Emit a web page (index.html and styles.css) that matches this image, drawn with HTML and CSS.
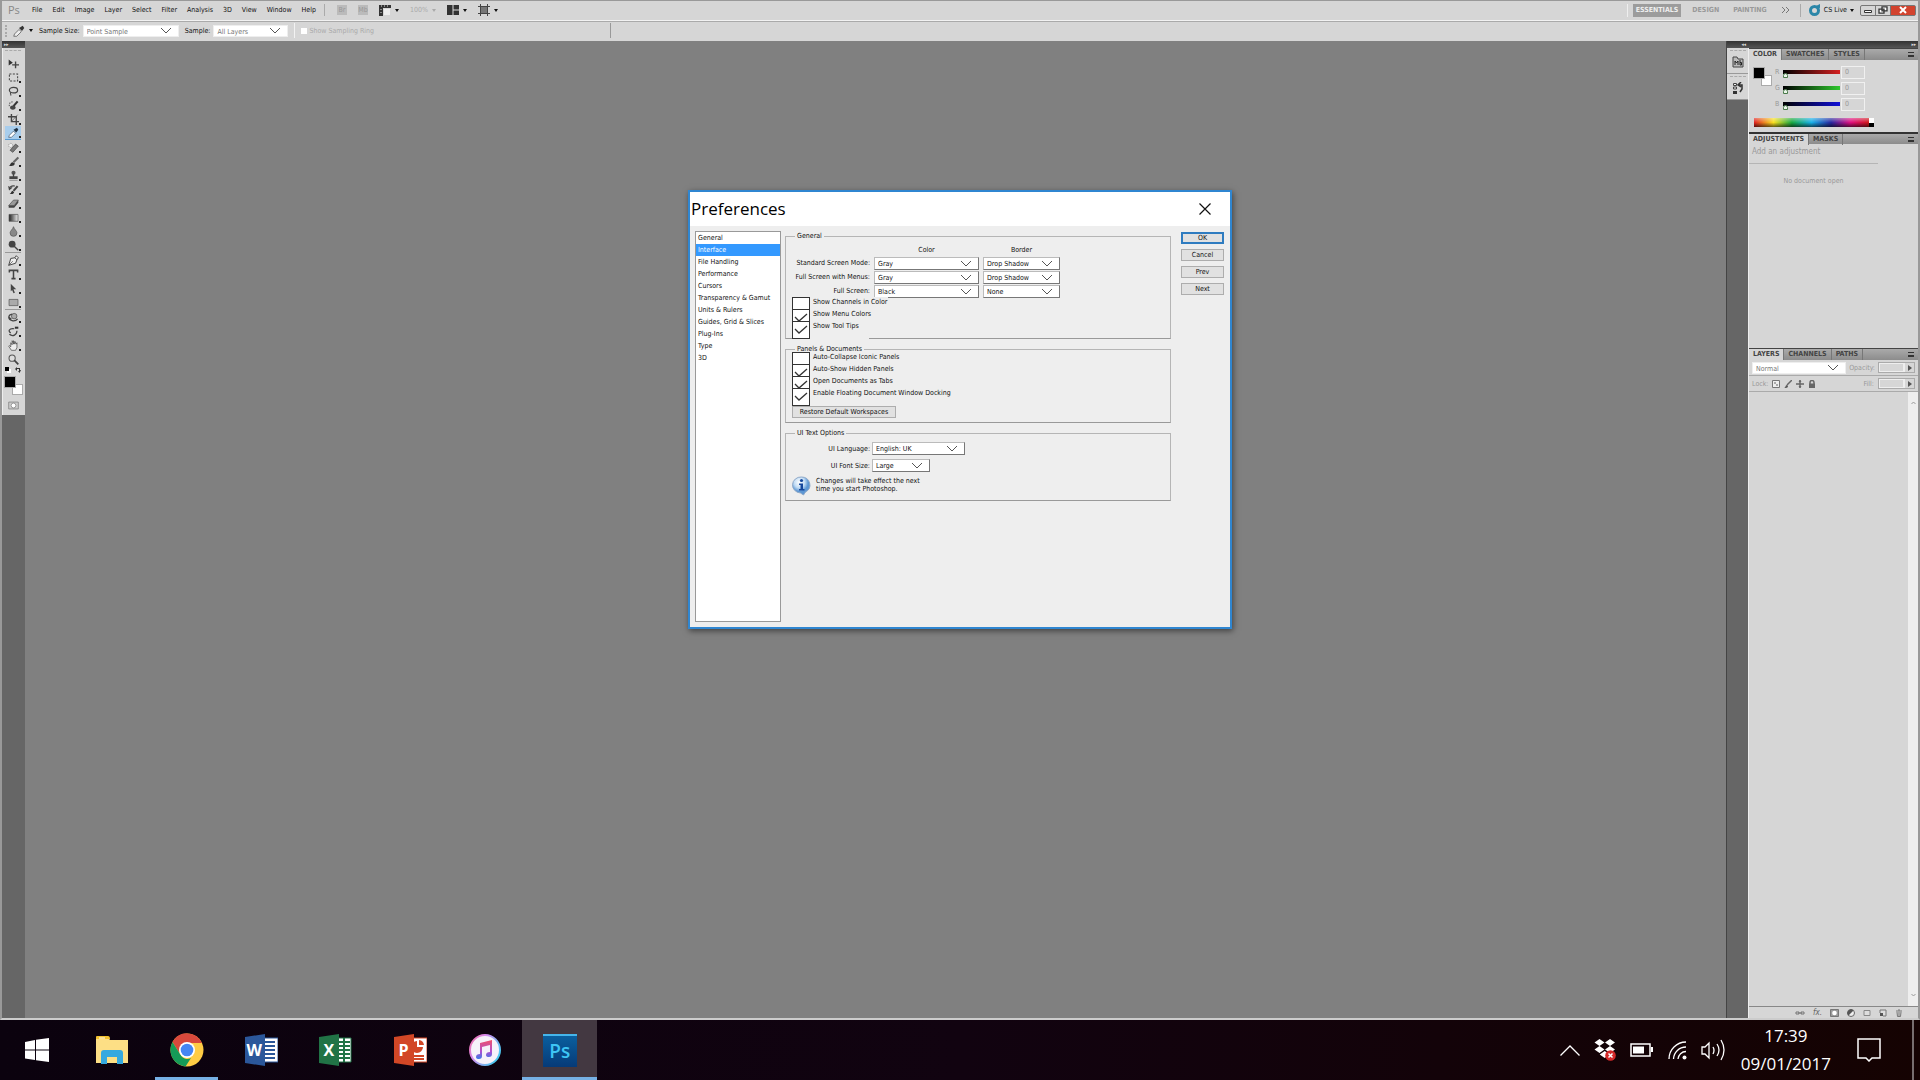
FILE: index.html
```html
<!DOCTYPE html>
<html lang="en">
<head>
    <meta charset="UTF-8">
    <meta name="viewport" content="width=device-width, initial-scale=1.0">
    <title>Preferences</title>
    <link rel="stylesheet" href="styles.css">
</head>
<body>
    <div class="app">
        <header class="menubar">
            <span class="app-logo">Ps</span>
            <nav class="menus">
                <button>File</button>
                <button>Edit</button>
                <button>Image</button>
                <button>Layer</button>
                <button>Select</button>
                <button>Filter</button>
                <button>Analysis</button>
                <button>3D</button>
                <button>View</button>
                <button>Window</button>
                <button>Help</button>
            </nav>
            <div class="menu-tools">
                <span class="app-chip">Br</span>
                <span class="app-chip">Mb</span>
                <button class="drop" aria-label="View extras">
                    <svg width="12" height="12" viewBox="0 0 12 12"><path d="M0 1h12v3H4v8H0z" fill="#333"/><path d="M2 2h1M5 2h1M8 2h1M2 5v1M2 8v1" stroke="#ddd"/><path d="M5 5h6v6H5z" fill="#eee"/></svg>
                    <i class="caret"></i>
                </button>
                <button class="drop faded">100% <i class="caret"></i></button>
                <button class="drop" aria-label="Arrange documents">
                    <svg width="12" height="12" viewBox="0 0 12 12"><path d="M0 1h12v10H0z" fill="#333"/><path d="M6 1v10M6 6h6" stroke="#ddd"/></svg>
                    <i class="caret"></i>
                </button>
                <button class="drop" aria-label="Screen mode">
                    <svg width="12" height="12" viewBox="0 0 12 12"><path d="M2.500 0v12M9.500 0v12M0 2.500h12M0 9.500h12" stroke="#444"/><path d="M3 3h6v6H3z" fill="#777"/></svg>
                    <i class="caret"></i>
                </button>
            </div>
            <div class="workspaces">
                <button class="active">ESSENTIALS</button>
                <button>DESIGN</button>
                <button>PAINTING</button>
                <button class="more" aria-label="More workspaces">
                    <svg width="9" height="8" viewBox="0 0 9 8"><path d="M1 1l3 3-3 3M5 1l3 3-3 3" fill="none" stroke="#777"/></svg>
                </button>
            </div>
            <button class="cs-live">
                <svg width="12" height="12" viewBox="0 0 12 12"><circle cx="5.500" cy="6.500" r="4" fill="none" stroke="#2b86a8" stroke-width="3"/><path d="M5 3l6-3v4z" fill="#2b86a8"/></svg>
                CS Live <i class="caret"></i>
            </button>
            <div class="window-buttons">
                <button aria-label="Minimise"><svg width="10" height="8" viewBox="0 0 10 8"><path d="M1.500 4.500h7v2h-7z" fill="#fff" stroke="#333"/></svg></button>
                <button aria-label="Restore"><svg width="10" height="8" viewBox="0 0 10 8"><path d="M4 .8h5v4H4zM1 3.200h5v4H1z" fill="#fff" stroke="#333" stroke-width="1.300"/></svg></button>
                <button class="close" aria-label="Close"><svg width="8" height="8" viewBox="0 0 8 8"><path d="M1 1l6 6M7 1L1 7" stroke="#fff" stroke-width="2"/></svg></button>
            </div>
        </header>

        <div class="optionsbar">
            <span class="grip"></span>
            <button class="drop" aria-label="Eyedropper presets">
                <svg width="12" height="12" viewBox="0 0 16 16"><path d="M1 15l1-3 6-6 3 3-6 6z" fill="#eee" stroke="#555"/><path d="M8 4l4 4 3-4-2-3z" fill="#333"/></svg>
                <i class="caret"></i>
            </button>
            <label for="sample-size">Sample Size:</label>
            <select id="sample-size" class="select pale size"><option>Point Sample</option></select>
            <label for="sample-layers">Sample:</label>
            <select id="sample-layers" class="select pale layers-opt"><option>All Layers</option></select>
            <span class="rule"></span>
            <label class="ring"><input type="checkbox" disabled> Show Sampling Ring</label>
            <span class="rule far"></span>
        </div>

        <div class="workspace">
            <aside class="toolcol">
                <div class="dock-head"><span>▸▸</span></div>
                <div class="tools">
                    <span class="dots"></span>
                    <button aria-label="Move"><svg viewBox="0 0 16 16"><path d="M1 2l6 5-6 4z" fill="#333"/><path d="M11 5v10M6 10h10" stroke="#444" stroke-width="2"/></svg></button>
                    <button class="more" aria-label="Marquee"><svg viewBox="0 0 16 16"><path d="M2 3h12v10H2z" fill="none" stroke="#444" stroke-dasharray="3 2" stroke-width="1.500"/></svg></button>
                    <button class="more" aria-label="Lasso"><svg viewBox="0 0 16 16"><ellipse cx="8" cy="6" rx="6" ry="4" fill="none" stroke="#444" stroke-width="1.800"/><path d="M4 9c-2 1 1 3 0 5" fill="none" stroke="#444" stroke-width="1.500"/></svg></button>
                    <button class="more" aria-label="Quick selection"><svg viewBox="0 0 16 16"><path d="M14 2L8 9" stroke="#333" stroke-width="3"/><ellipse cx="7" cy="11" rx="4" ry="3" fill="#444"/><path d="M2 9c-1-5 3-7 6-6" fill="none" stroke="#555" stroke-dasharray="2 1.500" stroke-width="1.500"/></svg></button>
                    <button class="more" aria-label="Crop"><svg viewBox="0 0 16 16"><path d="M5 0v11h11M0 4h12v12" fill="none" stroke="#444" stroke-width="2"/><path d="M14 1L5 11" stroke="#555"/></svg></button>
                    <button class="more active" aria-label="Eyedropper"><svg viewBox="0 0 16 16"><path d="M1 15l1-3 6-6 3 3-6 6z" fill="#fff" stroke="#456"/><path d="M8 4l4 4 3-4-2-3z" fill="#234"/></svg></button>
                    <button class="more" aria-label="Healing brush"><svg viewBox="0 0 16 16"><path d="M3 12l8-9 4 3-8 9z" fill="#777" stroke="#444"/><circle cx="4" cy="5" r="3" fill="#eee" stroke="#888" stroke-dasharray="2 1"/></svg></button>
                    <button class="more" aria-label="Brush"><svg viewBox="0 0 16 16"><path d="M15 2L8 9" stroke="#666" stroke-width="3"/><path d="M1 14c3 0 2-5 6-5l3 2c-1 4-5 4-9 3z" fill="#333"/></svg></button>
                    <button class="more" aria-label="Stamp"><svg viewBox="0 0 16 16"><circle cx="8" cy="4" r="3" fill="#555"/><path d="M7 5h2v4h5v4H2V9h5z" fill="#444"/><path d="M2 15h12" stroke="#777"/></svg></button>
                    <button class="more" aria-label="History brush"><svg viewBox="0 0 16 16"><path d="M14 3L8 10" stroke="#444" stroke-width="3"/><path d="M2 14c3 0 2-4 5-4l2 2c-1 3-4 3-7 2z" fill="#333"/><path d="M2 8c0-4 3-6 8-5M1 3l1 5 4-3" fill="none" stroke="#444" stroke-width="1.500"/></svg></button>
                    <button class="more" aria-label="Eraser"><svg viewBox="0 0 16 16"><path d="M1 11l7-8h7l-6 8z" fill="#999" stroke="#555"/><path d="M1 11h8l6-8v4l-6 7H1z" fill="#444"/></svg></button>
                    <button class="more" aria-label="Gradient"><svg viewBox="0 0 16 16"><defs><linearGradient id="grad"><stop stop-color="#222"/><stop offset="1" stop-color="#eee"/></linearGradient></defs><path d="M1.500 3.500h13v10h-13z" fill="url(#grad)" stroke="#555"/></svg></button>
                    <button class="more" aria-label="Blur"><svg viewBox="0 0 16 16"><path d="M8 1c1 4 5 6 5 9a5 5 0 01-10 0c0-3 4-5 5-9z" fill="#888" stroke="#555"/></svg></button>
                    <button class="more" aria-label="Burn"><svg viewBox="0 0 16 16"><circle cx="6" cy="6" r="5" fill="#444"/><path d="M9 9l6 6" stroke="#444" stroke-width="2"/></svg></button>
                    <hr>
                    <button class="more" aria-label="Pen"><svg viewBox="0 0 16 16"><path d="M1 15l3-10 6-1 3 3-2 5zM10 4l2-3 3 3-2 3" fill="#eee" stroke="#444" stroke-width="1.400"/><path d="M1 15l6-6" stroke="#444"/></svg></button>
                    <button class="more" aria-label="Type"><svg viewBox="0 0 16 16"><path d="M2 5V2h12v3M8 2v12M5 14h6" fill="none" stroke="#444" stroke-width="2.200"/></svg></button>
                    <button class="more" aria-label="Path selection"><svg viewBox="0 0 16 16"><path d="M4 1l8 8H8l2 5-2 1-2-5-2 2z" fill="#444"/></svg></button>
                    <button class="more" aria-label="Rectangle"><svg viewBox="0 0 16 16"><path d="M1.500 3.500h13v9h-13z" fill="#aaa" stroke="#555"/></svg></button>
                    <hr>
                    <button class="more" aria-label="3D rotate"><svg viewBox="0 0 16 16"><circle cx="9" cy="6" r="4" fill="#aaa" stroke="#444"/><path d="M1 7c0 6 9 8 13 3M6 3C0 4 0 9 5 10" fill="none" stroke="#444" stroke-width="1.800"/></svg></button>
                    <button class="more" aria-label="3D camera"><svg viewBox="0 0 16 16"><path d="M10 1h5v3h-5z" fill="#333"/><path d="M9 4C1 3 0 8 4 10M2 12c5 4 11 1 11-5" fill="none" stroke="#444" stroke-width="1.800"/></svg></button>
                    <button class="more" aria-label="Hand"><svg viewBox="0 0 16 16"><path d="M5 15L1 9l1-1 2 2V4l2 3V1l2 5V1l2 5V2l2 4 1-2v7l-2 4z" fill="#eee" stroke="#444"/></svg></button>
                    <button aria-label="Zoom"><svg viewBox="0 0 16 16"><circle cx="6" cy="6" r="4.500" fill="#ddd" stroke="#555" stroke-width="1.500"/><path d="M9 9l6 6" stroke="#444" stroke-width="2.500"/></svg></button>
                    <div class="swap">
                        <svg width="6" height="6" viewBox="0 0 6 6"><path d="M2 2h4v4H2z" fill="#fff"/><path d="M0 0h4v4H0z"/></svg>
                        <svg width="6" height="6" viewBox="0 0 6 6"><path d="M0 2l2-2v1h3v2h1L4.500 6 3 4h1V2H2v2z" fill="#333"/></svg>
                    </div>
                    <div class="swatches"><span class="back"></span><span class="fore"></span></div>
                    <button class="mask" aria-label="Quick mask"><svg viewBox="0 0 16 16"><path d="M1 3h14v10H1z" fill="#ccc" stroke="#777"/><circle cx="8" cy="8" r="3.500" fill="#fff" stroke="#777"/></svg></button>
                </div>
            </aside>

            <main class="canvas"></main>

            <aside class="iconcol">
                <div class="dock-head end"><span>◂◂</span></div>
                <div class="icon-slot">
                    <span class="dots"></span>
                    <button aria-label="Mini Bridge"><svg width="12" height="12" viewBox="0 0 12 12"><path d="M1 3V1h4l1 2h5v8H1z" fill="#bbb" stroke="#444"/><path d="M3 9V5l1.500 2L6 5v4M8 4v5h1.500V6.500H8" fill="none" stroke="#222"/></svg></button>
                </div>
                <div class="icon-slot">
                    <span class="dots"></span>
                    <button aria-label="History"><svg width="12" height="12" viewBox="0 0 12 12"><path d="M1.500 1.500h3v2h-3zM1.500 5h3v2h-3z" fill="#eee" stroke="#444"/><path d="M1 9h4v3H1z" fill="#333"/><path d="M6 3h4v4L8 10M9 0L6 3l3 2" fill="none" stroke="#333" stroke-width="1.500"/></svg></button>
                </div>
            </aside>

            <aside class="panels">
                <div class="dock-head end"><span>▸▸</span></div>
                <section class="panel color-panel">
                    <div class="tabs">
                        <button class="active">COLOR</button><button>SWATCHES</button><button>STYLES</button>
                        <span class="panel-menu"></span>
                    </div>
                    <div class="color-body">
                        <div class="swatches"><span class="back"></span><span class="fore"></span></div>
                        <div class="sliders">
                            <label for="red">R</label><input id="red" class="red" type="range" value="0" max="255"><input type="text" value="0" aria-label="Red value">
                            <label for="green">G</label><input id="green" class="green" type="range" value="0" max="255"><input type="text" value="0" aria-label="Green value">
                            <label for="blue">B</label><input id="blue" class="blue" type="range" value="0" max="255"><input type="text" value="0" aria-label="Blue value">
                        </div>
                    </div>
                    <div class="spectrum"><span class="hues"></span><span class="ends"></span></div>
                </section>
                <section class="panel adjust-panel">
                    <div class="tabs">
                        <button class="active">ADJUSTMENTS</button><button>MASKS</button>
                        <span class="panel-menu"></span>
                    </div>
                    <p class="adjust-title">Add an adjustment</p>
                    <p class="adjust-empty">No document open</p>
                </section>
                <section class="panel layers-panel">
                    <div class="tabs">
                        <button class="active">LAYERS</button><button>CHANNELS</button><button>PATHS</button>
                        <span class="panel-menu"></span>
                    </div>
                    <div class="layer-row">
                        <select class="select pale blend" aria-label="Blend mode"><option>Normal</option></select>
                        <label for="opacity">Opacity:</label>
                        <span class="stepper"><input id="opacity" type="text"><button aria-label="Opacity slider"><i></i></button></span>
                    </div>
                    <div class="layer-row lock">
                        <span>Lock:</span>
                        <svg width="8" height="8" viewBox="0 0 8 8"><path d="M.5.5h7v7h-7z" fill="#eee" stroke="#777"/><path d="M2 2h2v2H2zM4 4h2v2H4z" fill="#aaa"/></svg>
                        <svg width="8" height="8" viewBox="0 0 8 8"><path d="M8 0L3 5" stroke="#666" stroke-width="1.500"/><path d="M0 8c2 0 1-3 3-3l1 1c0 2-2 2-4 2z" fill="#555"/></svg>
                        <svg width="8" height="8" viewBox="0 0 8 8"><path d="M4 0v8M0 4h8" stroke="#666" stroke-width="1.500"/><path d="M2.500 2L4 0l1.500 2M2.500 6L4 8l1.500-2" fill="#666"/></svg>
                        <svg width="8" height="8" viewBox="0 0 8 8"><path d="M2 4V2.500a2 2 0 014 0V4" fill="none" stroke="#666" stroke-width="1.500"/><path d="M1 3.500h6V8H1z" fill="#666"/></svg>
                        <label for="fill">Fill:</label>
                        <span class="stepper"><input id="fill" type="text"><button aria-label="Fill slider"><i></i></button></span>
                    </div>
                    <div class="layer-list">
                        <div class="scroll">
                            <svg width="5" height="4" viewBox="0 0 5 4"><path d="M.5 3l2-2 2 2" fill="none" stroke="#999"/></svg>
                            <svg width="5" height="4" viewBox="0 0 5 4"><path d="M.5 1l2 2 2-2" fill="none" stroke="#999"/></svg>
                        </div>
                    </div>
                    <div class="layer-foot">
                        <svg width="10" height="8" viewBox="0 0 10 8"><path d="M1 3h3v2H1zM6 3h3v2H6zM3 4h4" fill="none" stroke="#777"/></svg>
                        <span class="fx">fx.</span>
                        <svg width="9" height="8" viewBox="0 0 9 8"><path d="M.5.5h8v7h-8z" fill="#999" stroke="#777"/><circle cx="4.500" cy="4" r="2.300" fill="#fff"/></svg>
                        <svg width="8" height="8" viewBox="0 0 8 8"><circle cx="4" cy="4" r="3.500" fill="#eee" stroke="#666"/><path d="M1.500 6.500l5-5A3.500 3.500 0 001.500 6.500z" fill="#555"/></svg>
                        <svg width="8" height="8" viewBox="0 0 8 8"><path d="M1 1.500h6v5H1z" fill="#ddd" stroke="#888"/></svg>
                        <svg width="8" height="8" viewBox="0 0 8 8"><path d="M1 1h6v6H4L1 4z" fill="#ddd" stroke="#777"/><path d="M1 7V4h3v3z" fill="#555"/></svg>
                        <svg width="8" height="8" viewBox="0 0 8 8"><path d="M1 2h6M2 3l.5 4.500h3L6 3M3 1h2M4 3v4" fill="none" stroke="#777"/></svg>
                    </div>
                </section>
            </aside>
        </div>
    </div>

    <div class="dialog" role="dialog" aria-labelledby="dialog-title">
        <div class="dialog-title">
            <h1 id="dialog-title">Preferences</h1>
            <button aria-label="Close">
                <svg width="12" height="12" viewBox="0 0 12 12"><path d="M.5.5l11 11M11.500.5l-11 11" stroke="#111" stroke-width="1.200"/></svg>
            </button>
        </div>
        <div class="dialog-body">
            <ul class="sections">
                <li><a href="#">General</a></li>
                <li class="selected"><a href="#">Interface</a></li>
                <li><a href="#">File Handling</a></li>
                <li><a href="#">Performance</a></li>
                <li><a href="#">Cursors</a></li>
                <li><a href="#">Transparency &amp; Gamut</a></li>
                <li><a href="#">Units &amp; Rulers</a></li>
                <li><a href="#">Guides, Grid &amp; Slices</a></li>
                <li><a href="#">Plug-Ins</a></li>
                <li><a href="#">Type</a></li>
                <li><a href="#">3D</a></li>
            </ul>

            <form class="groups">
                <fieldset class="general">
                    <legend>General</legend>
                    <div class="screen-grid">
                        <span></span><span class="col-head">Color</span><span class="col-head">Border</span>
                        <label for="std">Standard Screen Mode:</label>
                        <select id="std" class="select"><option>Gray</option></select>
                        <select class="select" aria-label="Standard border"><option>Drop Shadow</option></select>
                        <label for="full-menus">Full Screen with Menus:</label>
                        <select id="full-menus" class="select"><option>Gray</option></select>
                        <select class="select" aria-label="Full screen with menus border"><option>Drop Shadow</option></select>
                        <label for="full">Full Screen:</label>
                        <select id="full" class="select"><option>Black</option></select>
                        <select class="select" aria-label="Full screen border"><option>None</option></select>
                    </div>
                    <div class="checks">
                        <label><input type="checkbox"><span>Show Channels in Color</span></label>
                        <label><input type="checkbox" checked><span>Show Menu Colors</span></label>
                        <label><input type="checkbox" checked><span>Show Tool Tips</span></label>
                    </div>
                </fieldset>

                <fieldset class="documents">
                    <legend>Panels &amp; Documents</legend>
                    <div class="checks">
                        <label><input type="checkbox"><span>Auto-Collapse Iconic Panels</span></label>
                        <label><input type="checkbox" checked><span>Auto-Show Hidden Panels</span></label>
                        <label><input type="checkbox" checked><span>Open Documents as Tabs</span></label>
                        <label><input type="checkbox" checked><span>Enable Floating Document Window Docking</span></label>
                    </div>
                    <button type="button" class="push restore">Restore Default Workspaces</button>
                </fieldset>

                <fieldset class="text-options">
                    <legend>UI Text Options</legend>
                    <div class="field">
                        <label for="language">UI Language:</label>
                        <select id="language" class="select language"><option>English: UK</option></select>
                    </div>
                    <div class="field">
                        <label for="font-size">UI Font Size:</label>
                        <select id="font-size" class="select font-size"><option>Large</option></select>
                    </div>
                    <div class="note">
                        <svg width="19" height="20" viewBox="0 0 19 20">
                            <defs><radialGradient id="bubble" cx=".4" cy=".3"><stop stop-color="#fff"/><stop offset=".6" stop-color="#c3ddf5"/><stop offset="1" stop-color="#5d97d4"/></radialGradient></defs>
                            <path d="M9.500 1a8.500 8 0 014 15l-2 3-3-2A8.500 8 0 019.500 1z" fill="url(#bubble)" stroke="#8fa9c8"/>
                            <circle cx="9.500" cy="4.500" r="1.600" fill="#15479c"/><path d="M7 7.500h4V13h1.500v1.500H7V13h1.500V9H7z" fill="#15479c"/>
                        </svg>
                        <p>Changes will take effect the next<br>time you start Photoshop.</p>
                    </div>
                </fieldset>
            </form>

            <div class="actions">
                <button class="push default">OK</button>
                <button class="push">Cancel</button>
                <button class="push">Prev</button>
                <button class="push">Next</button>
            </div>
        </div>
    </div>

    <footer class="taskbar">
        <div class="pinned">
            <button aria-label="Start"><svg width="24" height="24" viewBox="0 0 24 24"><path d="M0 4l10-2v9.500H0zM11 1.800L24 0v11.500H11zM0 12.500h10V22L0 20.500zM11 12.500h13V24l-13-1.800z" fill="#fff"/></svg></button>
            <button aria-label="File Explorer"><svg width="32" height="28" viewBox="0 0 32 28"><path d="M0 1h12l2 3h18v23H0z" fill="#fddf85"/><path d="M0 1q0-1 1-1h11q2 0 2 3H0z" fill="#f2c230"/><path d="M3 2h6" stroke="#fff"/><path d="M5 28V17q0-3 3-3h16q3 0 3 3v11h-6v-7H11v7z" fill="#35a9df"/></svg></button>
            <button class="running" aria-label="Chrome"><svg width="34" height="34" viewBox="0 0 34 34"><circle cx="17" cy="17" r="16.500" fill="#fc4"/><path d="M2.500 9A16.500 16.500 0 0132 10H17a8 8 0 00-7 11z" fill="#d9493c"/><path d="M2.500 9l7.500 12a8 8 0 0011 4l-5.500 8.500A16.500 16.500 0 012.500 9z" fill="#159b57"/><circle cx="17" cy="17" r="8" fill="#fff"/><circle cx="17" cy="17" r="6.300" fill="#4586f3"/></svg></button>
            <button class="office" aria-label="Word"><span>W</span><svg width="33" height="32" viewBox="0 0 33 32"><path d="M18 4h15v24H18z" fill="#fff" stroke="#2b579a"/><path d="M19 8h11M19 12h11M19 16h11M19 20h11M19 24h11" stroke="#2b579a" stroke-width="2"/><path d="M0 3l20-3v32L0 29z" fill="#2b579a"/></svg></button>
            <button class="office" aria-label="Excel"><span>X</span><svg width="33" height="32" viewBox="0 0 33 32"><path d="M18 4h14v24H18z" fill="#fff" stroke="#217346"/><path d="M19 8h12M19 12h12M19 16h12M19 20h12M19 24h12M25 4v24" stroke="#217346" stroke-width="2"/><path d="M0 3l20-3v32L0 29z" fill="#217346"/></svg></button>
            <button class="office" aria-label="PowerPoint"><span>P</span><svg width="33" height="32" viewBox="0 0 33 32"><path d="M18 4h15v24H18z" fill="#fff" stroke="#d24726"/><path d="M19 22h11M19 25h11" stroke="#d24726" stroke-width="2"/><path d="M23 7v6h6a6 6 0 11-6-6z" fill="#d24726"/><path d="M25 6a6 6 0 015 5h-5z" fill="#d24726"/><path d="M0 3l20-3v32L0 29z" fill="#d24726"/></svg></button>
            <button aria-label="iTunes"><svg width="32" height="32" viewBox="0 0 32 32"><defs><linearGradient id="ring" x2="1" y2=".6"><stop stop-color="#f06a9b"/><stop offset=".4" stop-color="#d68cf0"/><stop offset="1" stop-color="#4bc8f0"/></linearGradient><linearGradient id="note" x2="0" y2="1"><stop stop-color="#f0506a"/><stop offset=".6" stop-color="#b04fd0"/><stop offset="1" stop-color="#3a7be8"/></linearGradient></defs><circle cx="16" cy="16" r="15" fill="#f6f2fa" stroke="url(#ring)" stroke-width="2"/><path d="M11 9l12-3v14q0 3-3 3t-3-2q0-3 4-3v-7l-8 2v9q0 3-3 3t-3-2q0-3 4-3z" fill="url(#note)"/></svg></button>
            <button class="running current ps" aria-label="Photoshop"><b>Ps</b></button>
        </div>
        <div class="tray">
            <svg width="20" height="11" viewBox="0 0 20 11"><path d="M.5 10.500L10 1l9.500 9.500" fill="none" stroke="#fff" stroke-width="1.300"/></svg>
            <svg width="22" height="22" viewBox="0 0 22 22"><path d="M5.500 0l5 3.500-5 3.500-5-3.500zM16 0l5 3.500L16 7l-5-3.500zM5.500 7l5 3.500-5 3.500-5-3.500zM16 7l5 3.500-5 3.500-5-3.500zM10.700 12l5 3.500-5 3.500-5-3.500z" fill="#fff"/><circle cx="16.500" cy="16.500" r="5.300" fill="#d42a2a"/><path d="M14.500 14.500l4 4M18.500 14.500l-4 4" stroke="#fff" stroke-width="1.500"/></svg>
            <svg width="24" height="14" viewBox="0 0 24 14"><path d="M1 1h19v12H1z" fill="none" stroke="#fff" stroke-width="1.500"/><path d="M3 3.500h11v7H3z" fill="#fff"/><path d="M21 4h2v5h-2z" fill="#fff"/></svg>
            <svg width="19" height="19" viewBox="0 0 19 19"><path d="M1 18A17 17 0 0118 1M5.500 18A12.500 12.500 0 0118 6M10 18a8 8 0 018-7.500" fill="none" stroke="#fff" stroke-width="1.300"/><circle cx="16.500" cy="16.500" r="2" fill="#fff"/></svg>
            <svg width="25" height="22" viewBox="0 0 25 22"><path d="M1 8v7h3l4 4V4L4 8z" fill="none" stroke="#fff" stroke-width="1.300"/><path d="M12 8q2 3 0 7M16 5q4 6 0 12M20 1q6 10 0 20" fill="none" stroke="#fff" stroke-width="1.300"/></svg>
            <div class="clock"><time>17:39</time><time>09/01/2017</time></div>
            <svg width="24" height="24" viewBox="0 0 24 24"><path d="M1 1h22v19h-8l-3 3-3-3H1z" fill="none" stroke="#fff" stroke-width="1.500"/></svg>
        </div>
    </footer>
</body>
</html>
```
FILE: styles.css
```css
* {
    box-sizing: border-box;
}

body {
    margin: 0;
    height: 100vh;
    display: flex;
    flex-direction: column;
    background-color: #808080;
    color: #111;
    font-family: "DejaVu Sans Condensed", "DejaVu Sans", sans-serif;
    font-size: 7px;
    line-height: 12px;
    overflow: hidden;
}

button,
input,
select {
    font: inherit;
    color: inherit;
    margin: 0;
    padding: 0;
    border: none;
    border-radius: 0;
    background: none;
}

svg {
    display: block;
    flex: none;
}

a {
    color: inherit;
    text-decoration: none;
}

p {
    margin: 0;
}

.app {
    flex: 1;
    min-height: 0;
    display: flex;
    flex-direction: column;
    border: 2px solid #999;
    border-top-width: 1px;
    border-bottom-color: #ccc;
}

.caret {
    border: 2px solid transparent;
    border-top: 3px solid currentColor;
    border-bottom: 0;
}

/* menu bar */
.menubar {
    display: flex;
    align-items: center;
    height: 20px;
    flex: none;
    padding: 0 2px 1px 6px;
    background-color: #d6d6d6;
    border-bottom: 1px solid #f2f2f2;
}

.app-logo {
    width: 24px;
    font-family: "Open Sans", sans-serif;
    font-size: 11px;
    color: #888;
}

.menus {
    display: flex;
    gap: 10px;
    padding-right: 8px;
    border-right: 1px solid #aaa;
}

.menu-tools {
    display: flex;
    align-items: center;
    gap: 11px;
    padding-left: 12px;
}

.app-chip {
    width: 10px;
    height: 10px;
    line-height: 10px;
    text-align: center;
    background-color: #bbb;
    color: #999;
}

.drop {
    display: flex;
    align-items: center;
    gap: 4px;
}

.faded {
    color: #aaa;
}

.workspaces {
    display: flex;
    align-items: center;
    gap: 8px;
    margin-left: auto;
    padding: 0 7px 0 5px;
    border-left: 1px solid #eee;
    border-right: 1px solid #aaa;
    color: #999;
    font-weight: bold;
}

.workspaces button {
    height: 13px;
    padding: 0 3px;
}

.workspaces .active {
    background-color: #9c9c9c;
    color: #eee;
}

.cs-live {
    display: flex;
    align-items: center;
    gap: 3px;
    padding: 0 6px 0 8px;
}

.window-buttons {
    display: flex;
    border: 1px solid #777;
    border-radius: 2px;
}

.window-buttons button {
    display: flex;
    align-items: center;
    justify-content: center;
    width: 15px;
    height: 9px;
    border-right: 1px solid #777;
}

.window-buttons .close {
    width: 24px;
    border-right: none;
    background-color: #d2432e;
}

/* options bar */
.optionsbar {
    display: flex;
    align-items: center;
    height: 20px;
    flex: none;
    padding: 0 0 2px 3px;
    background-color: #d6d6d6;
    border-top: 1px solid #aaa;
}

.grip {
    height: 12px;
    margin-right: 6px;
    border-left: 2px dotted #aaa;
}

.optionsbar label {
    margin: 0 3px 0 6px;
}

.select {
    appearance: none;
    width: 100%;
    height: 13px;
    padding-left: 3px;
    background: #fff url("data:image/svg+xml,%3Csvg xmlns='http://www.w3.org/2000/svg' width='12' height='7'%3E%3Cpath d='M1 1l5 5 5-5' fill='none' stroke='%23555'/%3E%3C/svg%3E") no-repeat right 6px center;
    border: 1px solid #bbb;
    border-right-color: #777;
    border-bottom-color: #777;
}

.pale {
    height: 12px;
    border-color: #eee;
    color: #777;
}

.size {
    width: 96px;
}

.layers-opt {
    width: 75px;
}

.rule {
    height: 15px;
    margin-left: 6px;
    border-left: 1px solid #f2f2f2;
}

.rule.far {
    margin-left: 236px;
    border-color: #999;
}

.optionsbar .ring {
    display: flex;
    align-items: center;
    gap: 2px;
    margin-right: 0;
    color: #aaa;
}

.ring input {
    appearance: none;
    width: 6px;
    height: 6px;
    background-color: #fff;
}

/* workspace */
.workspace {
    flex: 1;
    min-height: 0;
    display: flex;
}

.dock-head {
    height: 7px;
    flex: none;
    display: flex;
    padding: 0 2px;
    background: linear-gradient(#333, #555);
    color: #ddd;
    font-size: 5px;
    line-height: 6px;
}

.dock-head.end {
    justify-content: flex-end;
}

.toolcol {
    width: 23px;
    background-color: #666;
}

.tools {
    display: flex;
    flex-direction: column;
    align-items: center;
    padding-right: 2px;
    background-color: #d6d6d6;
    border-left: 1px solid #eee;
}

.dots {
    width: 16px;
    height: 6px;
    border-top: 1px dashed #aaa;
    margin-top: 2px;
}

.tools button {
    position: relative;
    display: flex;
    align-items: center;
    justify-content: center;
    width: 16px;
    height: 14px;
}

.tools svg {
    width: 11px;
    height: 11px;
}

.tools .more::after {
    content: "";
    position: absolute;
    right: 0;
    bottom: 1px;
    width: 2px;
    height: 2px;
    background-color: #222;
}

.tools .active {
    background-color: #a8cdec;
    border-bottom: 1px solid #5b9bd0;
}

.tools hr {
    width: 16px;
    height: 1px;
    margin: 0;
    border: none;
    background-color: #999;
}

.swap {
    display: flex;
    gap: 4px;
    padding: 1px 0 3px;
}

.tools .swap svg {
    width: 6px;
    height: 6px;
}

.swatches {
    display: grid;
    grid-template: 8px 11px / 8px 11px;
    flex: none;
}

.swatches span {
    border: 1px solid #aaa;
}

.swatches .fore {
    grid-area: 1 / 1 / 3 / 3;
    width: 12px;
    height: 12px;
    background-color: #000;
}

.swatches .back {
    grid-area: 2 / 2;
    background-color: #fff;
}

.tools .mask {
    height: 20px;
}

.canvas {
    flex: 1;
    background-color: #808080;
}

.iconcol {
    width: 22px;
    background-color: #666;
    border-left: 1px solid #444;
}

.icon-slot {
    display: flex;
    flex-direction: column;
    align-items: center;
    height: 26px;
    background-color: #d6d6d6;
    border-bottom: 1px solid #999;
}

.panels {
    width: 170px;
    display: flex;
    flex-direction: column;
    background-color: #d6d6d6;
}

.panel {
    border-left: 1px solid #eee;
}

.tabs {
    display: flex;
    align-items: center;
    height: 12px;
    flex: none;
    background: linear-gradient(#aaa, #8c8c8c);
    border-top: 1px solid #444;
    color: #444;
    font-weight: bold;
}

.tabs button {
    height: 11px;
    padding: 0 4px;
    line-height: 11px;
    border-right: 1px solid #777;
}

.tabs .active {
    background-color: #d6d6d6;
}

.panel-menu {
    width: 6px;
    height: 5px;
    margin: 0 4px 0 auto;
    border-top: 1px solid #333;
    border-bottom: 2px solid #333;
}

.color-panel {
    height: 84px;
}

.color-body {
    display: flex;
    gap: 3px;
    padding: 4px 4px 3px;
}

.color-body .swatches {
    margin-top: 3px;
}

.sliders {
    display: grid;
    grid-template-columns: 8px 58px 24px;
    grid-auto-rows: 16px;
    align-items: center;
    color: #999;
}

.sliders input[type="range"] {
    appearance: none;
    width: 57px;
    height: 12px;
    background: linear-gradient(90deg, #000, currentColor) no-repeat center 4px / 100% 4px;
}

.sliders .red {
    color: #d42020;
}

.sliders .green {
    color: #2ec82e;
}

.sliders .blue {
    color: #1010d8;
}

.sliders input::-webkit-slider-thumb {
    appearance: none;
    width: 5px;
    height: 5px;
    margin-top: 7px;
    background-color: #eaf5ea;
    border: 1px solid #4a7a4a;
    border-radius: 3px 3px 0 0;
}

.sliders input[type="text"] {
    width: 24px;
    height: 13px;
    padding-left: 3px;
    border: 1px solid #f0f0f0;
}

.spectrum {
    display: flex;
    width: 120px;
    height: 9px;
    margin: 3px 0 0 5px;
}

.hues {
    flex: 1;
    background: linear-gradient(rgba(255, 255, 255, 0.4), transparent 50%, rgba(0, 0, 0, 0.6)), linear-gradient(90deg, #e02020, #f8e020 17%, #18a840 33%, #18b0e8 50%, #2828a0 67%, #e01080 84%, #d01818);
}

.ends {
    width: 5px;
    background: linear-gradient(#fff 50%, #000 50%);
}

.adjust-panel {
    height: 216px;
    color: #999;
}

.adjust-panel .tabs {
    border-top: 2px solid #333;
}

.adjust-title {
    width: 129px;
    padding: 2px 0 5px 3px;
    font-size: 8px;
    border-bottom: 1px solid #b5b5b5;
}

.adjust-empty {
    width: 129px;
    padding: 11px 0;
    text-align: center;
}

.layers-panel {
    flex: 1;
    display: flex;
    flex-direction: column;
}

.layer-row {
    display: flex;
    align-items: center;
    gap: 3px;
    height: 16px;
    flex: none;
    padding: 0 3px;
    border-bottom: 1px solid #aaa;
    color: #999;
}

.blend {
    width: 97px;
}

.layer-row label {
    margin-left: auto;
}

.lock {
    gap: 4px;
}

.stepper {
    display: flex;
    border: 1px solid #aaa;
}

.stepper input {
    width: 25px;
    height: 9px;
    border: 1px solid #eee;
}

.stepper button {
    width: 10px;
    height: 9px;
    display: flex;
    align-items: center;
    justify-content: center;
    border-left: 1px solid #eee;
}

.stepper i {
    border: 3px solid transparent;
    border-left: 4px solid #555;
    border-right: 0;
}

.layer-list {
    flex: 1;
    display: flex;
    justify-content: flex-end;
}

.scroll {
    width: 10px;
    display: flex;
    flex-direction: column;
    justify-content: space-between;
    align-items: center;
    padding: 9px 0;
    background-color: #eee;
}

.layer-foot {
    display: flex;
    align-items: center;
    justify-content: flex-end;
    gap: 8px;
    height: 12px;
    flex: none;
    padding-right: 15px;
    border-top: 1px solid #888;
    color: #666;
}

.fx {
    font-style: italic;
    font-size: 8px;
}

/* preferences window */
.dialog {
    position: absolute;
    top: 190px;
    left: 50%;
    transform: translateX(-50%);
    width: 544px;
    background-color: #eee;
    border: 2px solid #2f86d1;
    box-shadow: 1px 2px 6px rgba(0, 0, 0, 0.5);
}

.dialog-title {
    display: flex;
    align-items: center;
    justify-content: space-between;
    height: 34px;
    padding: 0 19px 0 1px;
    background-color: #fff;
}

.dialog-title h1 {
    margin: 0;
    font-family: "Open Sans", sans-serif;
    font-size: 17px;
    font-weight: 400;
    color: #000;
}

.dialog-body {
    display: flex;
    gap: 4px;
    padding: 5px 6px 5px 5px;
}

.sections {
    width: 86px;
    height: 391px;
    margin: 0;
    padding: 0;
    list-style: none;
    background-color: #fff;
    border: 1px solid #999;
}

.sections li {
    padding-left: 2px;
}

.sections .selected {
    background-color: #3399ff;
    color: #fff;
}

.groups {
    flex: 1;
}

fieldset {
    margin: 0 0 5px;
    padding: 0 6px;
    border: 1px solid #b5b5b5;
    border-bottom-color: #999;
}

legend {
    margin-left: 3px;
    padding: 0 2px;
    line-height: 10px;
}

.general {
    height: 108px;
}

.documents {
    height: 79px;
}

.text-options {
    height: 73px;
}

.screen-grid {
    display: grid;
    grid-template-columns: 78px 105px 77px;
    grid-template-rows: 12px;
    grid-auto-rows: 13px;
    gap: 1px 4px;
    padding-top: 3px;
    text-align: right;
}

.col-head {
    text-align: center;
}

.checks label {
    position: relative;
    display: flex;
    align-items: flex-start;
    height: 12px;
    width: fit-content;
}

.checks label:last-child {
    height: 18px;
}

.checks input {
    appearance: none;
    flex: none;
    width: 18px;
    height: 18px;
    background-color: #fff;
    border: 1px solid #333;
}

.checks input:checked {
    background: #fff url("data:image/svg+xml,%3Csvg xmlns='http://www.w3.org/2000/svg' width='14' height='10'%3E%3Cpath d='M1 4l4 4 8-7' fill='none' stroke='%23333' stroke-width='1.300'/%3E%3C/svg%3E") no-repeat center;
}

.checks span {
    padding: 0 1px 0 3px;
    line-height: 10px;
    background-color: #eee;
}

.general .checks {
    margin-top: -1px;
}

.general .checks label:last-child span {
    width: 59px;
    height: 22px;
}

.documents .checks {
    margin-top: -2px;
}

.push {
    width: 43px;
    height: 12px;
    line-height: 10px;
    background-color: #e1e1e1;
    border: 1px solid #adadad;
}

.restore {
    display: block;
    width: 104px;
}

.field {
    display: flex;
    align-items: center;
    gap: 2px;
    margin-top: 4px;
}

.field label {
    width: 78px;
    text-align: right;
}

.language {
    width: 93px;
}

.font-size {
    width: 58px;
}

.note {
    display: flex;
    gap: 5px;
    padding-top: 4px;
    line-height: 8px;
}

.note p {
    padding-top: 1px;
}

.actions {
    display: flex;
    flex-direction: column;
    gap: 5px;
    padding: 1px 0 0 6px;
}

.default {
    border: 2px solid #2f7cc0;
    line-height: 8px;
}

/* taskbar */
.taskbar {
    display: flex;
    justify-content: space-between;
    height: 60px;
    flex: none;
    padding-right: 6px;
    background: linear-gradient(90deg, #0b020e, #110310 50%, #150302);
    color: #fff;
}

.pinned {
    display: grid;
    grid-template-columns: repeat(8, 1fr);
    width: 597px;
}

.pinned button {
    display: grid;
    place-items: center;
    margin: 0 6px;
    padding-top: 3px;
    border-bottom: 3px solid transparent;
}

.pinned .running {
    border-bottom-color: #76b0e4;
}

.pinned .current {
    margin: 0;
    background-color: #433841;
}

.office span {
    grid-area: 1 / 1;
    z-index: 1;
    padding-right: 14px;
    font-family: "Open Sans", sans-serif;
    font-size: 16px;
    font-weight: bold;
}

.office svg {
    grid-area: 1 / 1;
}

.ps b {
    width: 34px;
    height: 33px;
    line-height: 30px;
    background: linear-gradient(#0a5f9e, #063a78);
    border-top: 2px solid #45b5ea;
    color: #3ec6f5;
    font-family: "Open Sans", sans-serif;
    font-size: 19px;
    font-weight: 600;
}

.tray {
    display: flex;
    align-items: center;
    gap: 14px;
    padding-right: 31px;
    border-right: 2px solid #776e6e;
}

.clock {
    display: flex;
    flex-direction: column;
    align-items: center;
    font-family: "Open Sans", sans-serif;
    font-size: 17px;
    line-height: 28px;
    margin: 0 12px 0 1px;
}
```
